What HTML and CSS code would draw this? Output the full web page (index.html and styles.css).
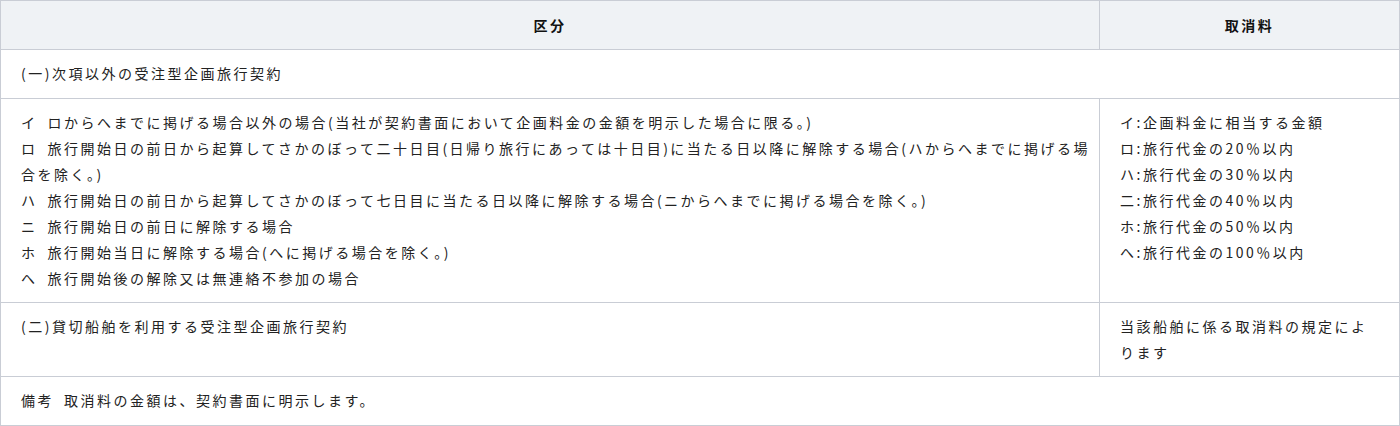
FILE: index.html
```html
<!DOCTYPE html>
<html lang="ja">
<head>
    <meta charset="UTF-8">
    <meta name="viewport" content="width=device-width, initial-scale=1.0">
    <title>取消料</title>
    <link rel="stylesheet" href="styles.css">
</head>
<body>
    <table class="cancel-table">
        <colgroup>
            <col>
            <col class="col-fee">
        </colgroup>
        <thead>
            <tr>
                <th>区分</th>
                <th>取消料</th>
            </tr>
        </thead>
        <tbody>
            <tr>
                <td colspan="2">(一)次項以外の受注型企画旅行契約</td>
            </tr>
            <tr>
                <td class="cond">
                    <span class="mark">イ</span>ロからへまでに掲げる場合以外の場合(当社が契約書面において企画料金の金額を明示した場合に限る。)<br>
                    <span class="mark">ロ</span>旅行開始日の前日から起算してさかのぼって二十日目(日帰り旅行にあっては十日目)に当たる日以降に解除する場合(ハからへまでに掲げる場合を除く。)<br>
                    <span class="mark">ハ</span>旅行開始日の前日から起算してさかのぼって七日目に当たる日以降に解除する場合(ニからへまでに掲げる場合を除く。)<br>
                    <span class="mark">ニ</span>旅行開始日の前日に解除する場合<br>
                    <span class="mark">ホ</span>旅行開始当日に解除する場合(へに掲げる場合を除く。)<br>
                    <span class="mark">へ</span>旅行開始後の解除又は無連絡不参加の場合
                </td>
                <td>
                    イ:企画料金に相当する金額<br>
                    ロ:旅行代金の20％以内<br>
                    ハ:旅行代金の30％以内<br>
                    二:旅行代金の40％以内<br>
                    ホ:旅行代金の50％以内<br>
                    へ:旅行代金の100％以内
                </td>
            </tr>
            <tr>
                <td>(二)貸切船舶を利用する受注型企画旅行契約</td>
                <td>当該船舶に係る取消料の規定によります</td>
            </tr>
            <tr>
                <td colspan="2"><span class="mark">備考</span>取消料の金額は、契約書面に明示します。</td>
            </tr>
        </tbody>
    </table>
</body>
</html>
```

FILE: styles.css
```css
*{
    box-sizing: border-box;
}

body{
    margin: 0;
    font-family: "Noto Sans CJK JP", "Noto Sans", sans-serif;
    font-size: 14px;
    color: #222;
    background: #fff;
}

.cancel-table{
    width: 100%;
    border-collapse: collapse;
    table-layout: fixed;
}
.cancel-table .col-fee{
    width: 300px;
}
.cancel-table tr{
    height: 49px;
}
.cancel-table th,
.cancel-table td{
    border: 1px solid #c9cdd5;
    padding: 10px 20px 11px;
    line-height: 26px;
    letter-spacing: 2.5px;
    text-align: left;
    vertical-align: top;
}
.cancel-table th{
    background: #eff2f5;
    color: #111;
    font-weight: bold;
    text-align: center;
    vertical-align: middle;
}
.cancel-table td.cond{
    padding-right: 3px;
}
.cancel-table .mark{
    margin-right: 10px;
}
```
